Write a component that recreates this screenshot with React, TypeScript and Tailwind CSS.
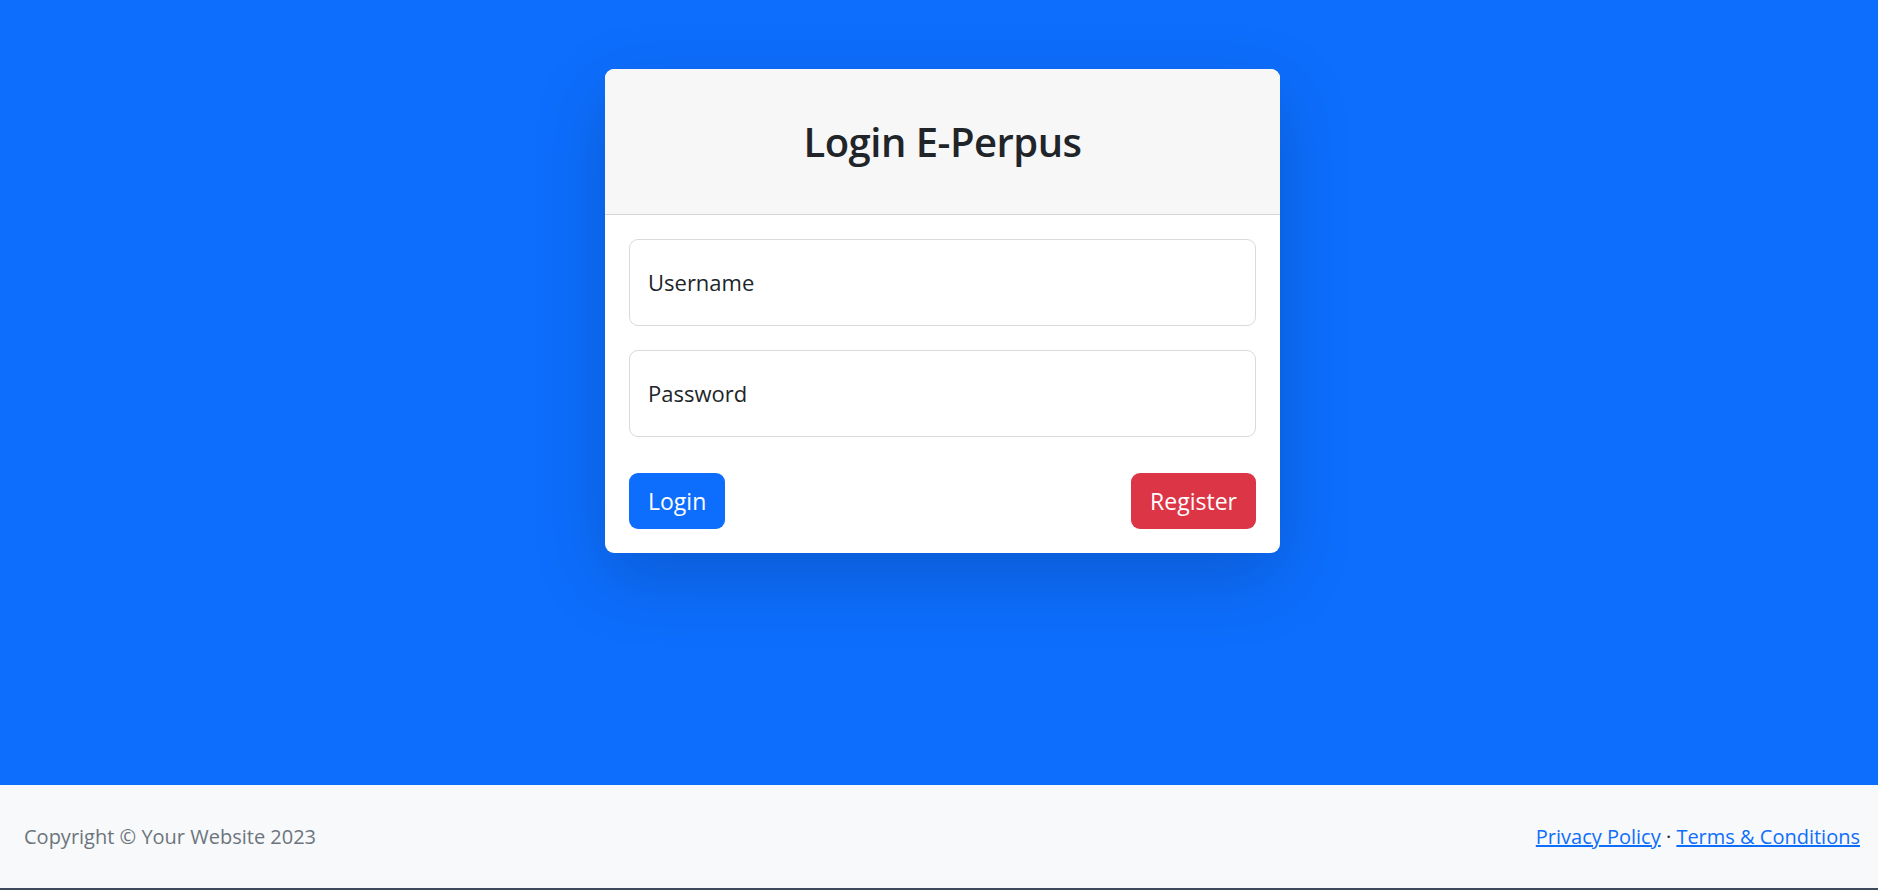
import React from 'react';

const font = { fontFamily: '"Open Sans", "Noto Sans", sans-serif' };

function FloatingInput({ label, type }: { label: string; type: string }) {
  return (
    <div className="relative">
      <input
        type={type}
        aria-label={label}
        className="block w-full h-[87px] rounded-[9px] border border-[#d8dadd] bg-white px-[18px] text-[24px] text-[#212529] outline-none"
      />
      <label className="pointer-events-none absolute left-[19px] top-0 flex h-[87px] items-center text-[22px] text-[#212529]">
        {label}
      </label>
    </div>
  );
}

export default function App() {
  return (
    <div className="flex h-[890px] w-full flex-col bg-[#0d6efd]" style={font}>
      {/* Main */}
      <main className="flex-1 pt-[69px]">
        <div className="mx-auto w-[675px] pl-[7px] box-content">
          <div className="overflow-hidden rounded-[9px] bg-white shadow-[0_24px_72px_rgba(0,0,0,0.175)]">
            <div className="flex h-[146px] items-center justify-center border-b border-[#d4d4d4] bg-[#f7f7f7]">
              <h3 className="text-[40px] font-semibold leading-[1.2] tracking-[-0.5px] text-[#212529]">Login E-Perpus</h3>
            </div>
            <div className="flex flex-col p-[24px]">
              <div className="flex flex-col gap-[24px]">
                <FloatingInput label="Username" type="text" />
                <FloatingInput label="Password" type="password" />
              </div>
              <div className="mt-[36px] flex items-center justify-between">
                <button className="h-[56px] rounded-[9px] bg-[#0d6efd] px-[19px] text-[23px] text-white">
                  Login
                </button>
                <button className="h-[56px] rounded-[9px] bg-[#dc3545] px-[19px] text-[23px] text-white">
                  Register
                </button>
              </div>
            </div>
          </div>
        </div>
      </main>

      {/* Footer */}
      <footer className="flex h-[103px] items-center justify-between bg-[#f8f9fa] pl-[24px] pr-[18px] text-[20px]">
        <div className="text-[#6c757d]">Copyright © Your Website 2023</div>
        <div className="text-[#212529]">
          <a href="#" className="text-[#0d6efd] underline">Privacy Policy</a>
          {' · '}
          <a href="#" className="text-[#0d6efd] underline">Terms &amp; Conditions</a>
        </div>
      </footer>
      <div className="h-[2px] bg-[#3d4a5c]" />
    </div>
  );
}
